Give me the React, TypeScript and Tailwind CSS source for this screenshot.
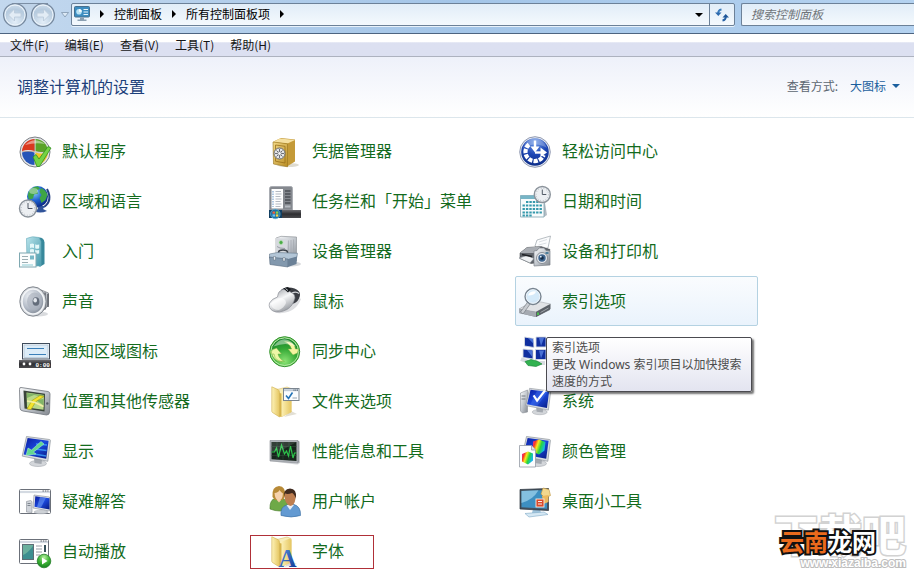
import type { ReactNode } from 'react';

type PanelItem = {
  label: string;
  icon: ReactNode;
  hidden?: boolean;
  active?: boolean;
  marked?: boolean;
};

const Icon = ({ children }: { children: ReactNode }) => (
  <svg viewBox="0 0 32 32" className="size-8 shrink-0 overflow-visible" aria-hidden="true">
    {children}
  </svg>
);

const Gradients = () => (
  <svg className="absolute size-0" aria-hidden="true">
    <defs>
      <linearGradient id="silver" x1="0" y1="0" x2="1" y2="1">
        <stop offset="0" stopColor="#fafbfc" />
        <stop offset="0.5" stopColor="#c3c8ce" />
        <stop offset="1" stopColor="#83888f" />
      </linearGradient>
      <linearGradient id="screen" x1="0" y1="0" x2="1" y2="1">
        <stop offset="0" stopColor="#0a1c9c" />
        <stop offset="0.5" stopColor="#1c4ae0" />
        <stop offset="1" stopColor="#071a80" />
      </linearGradient>
      <linearGradient id="teal" x1="0" y1="0" x2="1" y2="1">
        <stop offset="0" stopColor="#b9e4ec" />
        <stop offset="1" stopColor="#4599ab" />
      </linearGradient>
      <linearGradient id="gold" x1="0" y1="0" x2="1" y2="1">
        <stop offset="0" stopColor="#f3d987" />
        <stop offset="1" stopColor="#b98d24" />
      </linearGradient>
      <linearGradient id="folder" x1="0" y1="0" x2="1" y2="0">
        <stop offset="0" stopColor="#fdf2b8" />
        <stop offset="1" stopColor="#e5c661" />
      </linearGradient>
      <linearGradient id="rainbow" x1="0" y1="0" x2="1" y2="0.4">
        <stop offset="0" stopColor="#f01cc0" />
        <stop offset="0.25" stopColor="#f53c22" />
        <stop offset="0.45" stopColor="#f9e81c" />
        <stop offset="0.7" stopColor="#25d53e" />
        <stop offset="1" stopColor="#16b6ee" />
      </linearGradient>
      <linearGradient id="tray" x1="0" y1="0" x2="0" y2="1">
        <stop offset="0" stopColor="#6b6b6f" />
        <stop offset="0.5" stopColor="#2e2e31" />
        <stop offset="1" stopColor="#4a4a4d" />
      </linearGradient>
      <linearGradient id="letter" x1="0" y1="0" x2="1" y2="1">
        <stop offset="0" stopColor="#5f9be8" />
        <stop offset="1" stopColor="#0b318f" />
      </linearGradient>
      <linearGradient id="mouseBody" x1="0.2" y1="0.1" x2="0.7" y2="1">
        <stop offset="0" stopColor="#a9acb1" />
        <stop offset="0.4" stopColor="#f6f7f8" />
        <stop offset="1" stopColor="#8d9197" />
      </linearGradient>
      <radialGradient id="greenBall" cx="0.5" cy="0.25" r="0.8">
        <stop offset="0" stopColor="#b6f0a0" />
        <stop offset="0.5" stopColor="#3fb336" />
        <stop offset="1" stopColor="#0f7a1c" />
      </radialGradient>
      <radialGradient id="greenCore" cx="0.5" cy="0.85" r="0.9">
        <stop offset="0" stopColor="#8be374" />
        <stop offset="0.5" stopColor="#35a936" />
        <stop offset="1" stopColor="#0f7a25" />
      </radialGradient>
      <radialGradient id="blueBall" cx="0.5" cy="0.15" r="0.9">
        <stop offset="0" stopColor="#6f9be8" />
        <stop offset="0.5" stopColor="#1c45b4" />
        <stop offset="1" stopColor="#0d2c84" />
      </radialGradient>
      <radialGradient id="earth" cx="0.35" cy="0.3" r="0.8">
        <stop offset="0" stopColor="#8fd0fa" />
        <stop offset="0.5" stopColor="#1f62d0" />
        <stop offset="1" stopColor="#081f78" />
      </radialGradient>
      <radialGradient id="cone" cx="0.35" cy="0.3" r="0.8">
        <stop offset="0" stopColor="#eef1f5" />
        <stop offset="0.6" stopColor="#b2bac6" />
        <stop offset="1" stopColor="#7c8490" />
      </radialGradient>
      <radialGradient id="navBall" cx="0.5" cy="0.8" r="0.9">
        <stop offset="0" stopColor="#e3eef8" />
        <stop offset="0.6" stopColor="#b5cade" />
        <stop offset="1" stopColor="#dde8f3" />
      </radialGradient>
    </defs>
  </svg>
);

const Monitor = ({ children }: { children?: ReactNode }) => (
  <>
    <ellipse cx="19" cy="28.5" rx="8.5" ry="3" fill="#d3d6da" stroke="#a3a8ae" strokeWidth="0.6" />
    <path d="M15 23l8 1.5-.5 4.5-7-1z" fill="#a4a9b0" />
    <path d="M7.5 1.5l23 3c.6.1 1 .5.9 1.2l-2.6 20.6-25.6-5.2z" fill="#d9dce0" stroke="#8d939b" strokeWidth="0.7" />
    <path d="M8.6 3l21 2.8-2.4 18-22.6-4.2z" fill="url(#screen)" />
    {children}
  </>
);

const ClockFace = ({ cx, cy, r }: { cx: number; cy: number; r: number }) => (
  <>
    <circle cx={cx} cy={cy} r={r} fill="#eceff2" stroke="#8b939b" strokeWidth="1.4" />
    <circle cx={cx} cy={cy} r={r - 1.8} fill="none" stroke="#a6adb5" strokeWidth="0.9" strokeDasharray="0.8 1.9" />
    <path d={`M${cx} ${cy - r + 3}V${cy}h${r - 4}`} fill="none" stroke="#525a66" strokeWidth="1" />
  </>
);

const WindowFrame = ({ width }: { width: number }) => (
  <>
    <rect x="0.5" y="4.5" width={width} height="24" rx="1" fill="#fff" stroke="#6b7079" />
    <path d={`M1 7h${width - 1}`} stroke="#d4dae2" strokeWidth="2.2" />
    <path d={`M${width - 7.5} 6h6`} stroke="#5b616b" strokeWidth="1.2" strokeDasharray="1.4 1" />
  </>
);

const Folder = () => (
  <>
    <path d="M22 26l6 3-13 3z" fill="#e2dfd4" />
    <path d="M8 4.500L18 2l4 1.500V27l-9 4.500-5-2z" fill="#f8edb9" stroke="#d4b55a" strokeWidth="0.500" />
    <path d="M12 7l8.500-3.500 2 1V27L12 32z" fill="url(#folder)" />
    <path d="M2.800 1.800L9 4.500q1.500 1 1.500 3V32l-7-4.500q-.7-.5-.7-1.500z" fill="url(#folder)" stroke="#ceac4a" strokeWidth="0.600" />
    <path d="M10.500 8l2 .5V32l-2-.5z" fill="#d6b44c" />
  </>
);

const DefaultPrograms = () => (
  <Icon>
    <circle cx="16" cy="17" r="15" fill="#e3e5e9" stroke="#7d8187" />
    <path d="M15.500 16V4A13 13 0 0 0 3 16q6-2 12.500 0z" fill="#d9391f" />
    <path d="M16.500 16V4A13 13 0 0 1 29 16q-6 2-12.500 0z" fill="#5aa329" />
    <path d="M15.500 17.500V30A13 13 0 0 1 3 17.500q6-2 12.500 0z" fill="#2555b8" />
    <path d="M16.500 17.500V30A13 13 0 0 0 29 17.500q-6 2-12.500 0z" fill="#f4c22a" />
    <path d="M15.500 4v12.500H3M16 17h13" fill="none" stroke="#7d4a2c" strokeWidth="0.600" opacity="0.500" />
    <path d="M6 10Q15 1 26 9q-9-2-20 1z" fill="#fff" opacity="0.450" />
    <path d="M14 22l3-2.500 3 4.500 9-12.500 3 1.500-11.500 18.500h-2.500z" fill="#74d344" stroke="#2f8f1e" strokeWidth="0.800" />
  </Icon>
);

const Region = () => (
  <Icon>
    <path d="M28 4q6 12-3 18" fill="none" stroke="#233f82" strokeWidth="2" />
    <path d="M18 21h8l-2 3 4 2q-7 3-13 0l4-2z" fill="#31549a" />
    <circle cx="18.500" cy="11.500" r="10.500" fill="url(#earth)" />
    <path d="M10 6q4-5 9-4.500l2 2-3 2 1 3-4 1-1 4-4 1q-2-4 0-8.500zM22 3q5 2 6.500 7l-2 5-4 3-2-5 2-3-2-3z" fill="#3fa544" />
    <ellipse cx="14.500" cy="6" rx="4.500" ry="3" fill="#fff" opacity="0.400" />
    <ClockFace cx={9} cy={23.500} r={8.500} />
  </Icon>
);

const GettingStarted = () => (
  <Icon>
    <path d="M20 2.500q5 0 5.500 5V29l-5 3z" fill="#37889b" />
    <path d="M7.500 3.500Q13 .5 20 2.500l2 4V31H8z" fill="url(#teal)" stroke="#64a9b8" strokeWidth="0.600" />
    <path d="M11 9q2.500-1 4 0v4q-2-1-4 0zM16.200 9.300q2 1 4 0v4q-2 1-4 0zM11 14.500q2.500-1 4 0v3.500q-2-1-4 0zM16.200 14.800q2 1 4 0v3.500q-2 1-4 0z" fill="#e4f7f9" />
    <rect x="0.500" y="18" width="16.500" height="14" fill="#fbfdfd" stroke="#7fa8b1" />
    <path d="M3 21.500h6M3 24.500h6M3 27.500h6" stroke="#9baeb3" strokeWidth="1.200" />
    <rect x="11" y="20.500" width="4" height="4" fill="#79b9c7" />
    <path d="M3 30h11" stroke="#8bcbd4" />
  </Icon>
);

const Sound = () => (
  <Icon>
    <ellipse cx="19" cy="29" rx="10" ry="2.500" fill="#d9dbde" />
    <path d="M17 3q8 3 12.500 5v12q-4 6-10 8z" fill="url(#silver)" stroke="#74797f" strokeWidth="0.700" />
    <path d="M26 7.500v17M29 9v13" stroke="#62676e" strokeWidth="1.600" />
    <ellipse cx="14" cy="16.500" rx="13.200" ry="14.700" fill="#d3d7dc" stroke="#777d84" strokeWidth="0.900" />
    <ellipse cx="14" cy="16.500" rx="11" ry="12.500" fill="url(#cone)" stroke="#f4f6f8" strokeWidth="1.500" />
    <ellipse cx="15.500" cy="16.500" rx="7.500" ry="9" fill="#acb3bf" opacity="0.700" />
    <ellipse cx="17" cy="16.500" rx="3.400" ry="4.300" fill="#646d7b" />
    <ellipse cx="16.200" cy="15.300" rx="1.800" ry="2.200" fill="#e3e7ed" />
  </Icon>
);

const NotificationIcons = () => (
  <Icon>
    <rect x="3.500" y="8.500" width="27" height="15.500" fill="#f7fafd" stroke="#3f4c5c" />
    <rect x="5" y="10" width="24" height="12.500" fill="#dcecf8" stroke="#a4b9cb" strokeWidth="0.600" />
    <path d="M8 13.500h17M10 19.500h17" stroke="#3a7fb9" strokeWidth="1.200" />
    <rect x="0" y="25" width="32" height="8" fill="url(#tray)" />
    <circle cx="5" cy="29" r="1.400" fill="#fff" />
    <circle cx="11" cy="29" r="1.400" fill="#fff" />
    <text x="16.500" y="31.500" fontSize="6" fontWeight="700" fill="#fff" fontFamily="Liberation Mono, monospace">
      0:00
    </text>
  </Icon>
);

const Location = () => (
  <Icon>
    <path d="M2 2.500l27 4q2 .5 2 2.500l-.5 18q0 3-3 3L4 26q-3-.5-3-3L.5 4.500Q.5 2 2 2.500z" fill="url(#silver)" stroke="#70757c" strokeWidth="0.800" />
    <path d="M4.500 5.500l21.500 3.300-.5 17.700-20-3z" fill="#39443a" />
    <path d="M7.500 7.500l17.500 2.500-.5 14.800-16.500-2.300z" fill="#b9d98a" />
    <path d="M8 13l7-3 10 2v-2L15 9 8 8zM17 15l7.500-1-.5 6z" fill="#81b467" />
    <path d="M25 11.500l-8 5-5 8-4-.5 5-8.500L21 10.500z" fill="#f3e42d" stroke="#a49a12" strokeWidth="0.600" />
    <path d="M8 16l8 1.500 8.500 4" fill="none" stroke="#f4f0a6" strokeWidth="1.600" />
    <circle cx="28.300" cy="18.500" r="1.200" fill="#565c64" />
  </Icon>
);

const Display = () => (
  <Icon>
    <Monitor>
      <path d="M17 9l11 1M16 14l11.500 1.500M15 19l12 2" stroke="#3fa5ff" strokeWidth="1.300" opacity="0.800" />
      <path d="M22 6.500l-9.500 8.500-3.500-2-2 7.500 10-1.500-2.500-2L25 9z" fill="#62d890" stroke="#bdf5d2" strokeWidth="0.500" />
    </Monitor>
  </Icon>
);

const Troubleshooting = () => (
  <Icon>
    <WindowFrame width={31} />
    <path d="M7.500 16.500l4-1 1.500 1v11l-5.500-.5z" fill="#d0d4da" stroke="#8c9199" strokeWidth="0.600" />
    <path d="M8.500 18.500h3M8.500 20.500h3" stroke="#7f868f" />
    <path d="M15 10l15.500 2v14l-16.500-3z" fill="#e1e4e8" stroke="#868c94" strokeWidth="0.600" />
    <path d="M16.300 11.300l14.200 1.900v11.200l-15-2.700z" fill="url(#screen)" />
    <path d="M21 12l6 .8-5 9.800-4-.6z" fill="#7caaf7" opacity="0.500" />
    <ellipse cx="22" cy="27" rx="7" ry="1.800" fill="#cdd1d6" stroke="#9ba0a6" strokeWidth="0.400" />
  </Icon>
);

const AutoPlay = () => (
  <Icon>
    <WindowFrame width={29} />
    <rect x="3.500" y="9.500" width="11" height="15" fill="#3e8f90" stroke="#5e6d75" />
    <path d="M4 20q5-2 10-9v-1H4z" fill="#89c7a6" opacity="0.600" />
    <path d="M17 11h6M17 14h6M17 17h6M17 20h4" stroke="#979da6" strokeWidth="1.200" />
    <path d="M26 10v7" stroke="#37505a" strokeWidth="2" />
    <circle cx="25" cy="26" r="6.800" fill="url(#greenBall)" stroke="#26802a" strokeWidth="0.800" />
    <path d="M23 22.500l5.500 3.500-5.500 3.500z" fill="#fff" />
  </Icon>
);

const Credentials = () => (
  <Icon>
    <ellipse cx="19" cy="30" rx="11" ry="2" fill="#dedbd0" />
    <path d="M4.500 6.500L12 3l14 1.500v22L18 31.500z" fill="#c49a38" />
    <path d="M4 7l7-3.500 15 1.500-7.500 3.500z" fill="#f5e0a0" />
    <path d="M4 7l14.500 1.800v23L4.500 29z" fill="url(#gold)" stroke="#97731d" strokeWidth="0.600" />
    <path d="M6.500 10l9.500 1.300v16.700l-9.500-1.800z" fill="none" stroke="#98701b" strokeWidth="0.800" />
    <circle cx="10.500" cy="18.500" r="5.500" fill="#e4e5e7" stroke="#686b70" />
    <path d="M10.500 14v9M6 18.500h9M7.500 15.500l6 6M13.500 15.500l-6 6" stroke="#5d6066" strokeWidth="0.900" />
    <circle cx="10.500" cy="18.500" r="1.800" fill="#f6f7f8" stroke="#65686e" strokeWidth="0.600" />
  </Icon>
);

const Taskbar = () => (
  <Icon>
    <path d="M.5 3.500q0-2 2-2H22q1.500 0 1.500 2V25H.5z" fill="#85898f" stroke="#a3a7ad" strokeWidth="0.800" />
    <rect x="2.500" y="4" width="11.500" height="19.500" fill="#fdfdfd" />
    <path d="M6.500 6.500h5.500M6.500 9h6M6.500 11.500h5M6.500 14h6M6.500 16.500h5M6.500 19h6M6.500 21.500h5" stroke="#b5bac2" />
    <path d="M4 6v16" stroke="#8ab0d6" strokeWidth="1.300" strokeDasharray="1.400 1.100" />
    <path d="M16 6h5.500M16 9h5.500M16 12h5.500M16 15h5.500M16 18h5.500" stroke="#4b4f55" strokeWidth="1.300" />
    <rect x="16" y="20.500" width="5.500" height="2" fill="#b5bac0" />
    <rect x="0" y="25" width="32" height="8" fill="url(#tray)" />
    <path d="M0 25h13v8H0z" fill="#123f62" />
    <circle cx="6.300" cy="29" r="4.800" fill="#1870a6" stroke="#72bddd" strokeWidth="0.600" />
    <path d="M3.500 26.500h2.500v2.200H3.500z" fill="#f0603b" />
    <path d="M6.800 26.500h2.500v2.200H6.800z" fill="#8fd24a" />
    <path d="M3.500 29.400h2.500v2.200H3.500z" fill="#6ec3f3" />
    <path d="M6.800 29.400h2.500v2.200H6.800z" fill="#fcd441" />
  </Icon>
);

const DeviceManager = () => (
  <Icon>
    <ellipse cx="22" cy="29" rx="10" ry="2.500" fill="#d7d9dc" />
    <path d="M7 3l5-1.700 15.500.7v24L18 28 7 25z" fill="url(#silver)" stroke="#85898f" strokeWidth="0.600" />
    <path d="M7 3l11 1v23L7 25z" fill="#d6d9de" />
    <path d="M19.500 5.500v19M22 5v19M24.500 4.500v19" stroke="#a3a8af" strokeWidth="0.700" />
    <circle cx="12" cy="7.500" r="2" fill="#48aa45" stroke="#b9e5b5" strokeWidth="0.700" />
    <path d="M8 11.500q2 2 8 2" stroke="#888e96" strokeWidth="0.800" fill="none" />
    <path d="M9.500 20v-2.500q0-2.500 4.500-2.500t4.500 2.500V20" fill="none" stroke="#3d434b" strokeWidth="1.500" />
    <path d="M.5 19l8-1.500 20 .8-.7 4.200-8.800 2.500L.5 23z" fill="#b3c6d7" stroke="#65798c" strokeWidth="0.600" />
    <path d="M.5 22l18.500 2v8L1 29.500z" fill="#8399ae" stroke="#596c80" strokeWidth="0.600" />
    <path d="M19 24l9-2.500-.5 7.500-8.500 3z" fill="#6b8197" />
    <path d="M4.500 21.500h2v3.500h-2zM14 22.500h2V26h-2z" fill="#e7ecf1" stroke="#4d5b69" strokeWidth="0.400" />
  </Icon>
);

const Mouse = () => (
  <Icon>
    <path d="M4 25q14 3 25-13l3 2q-5 13-19 14-7 1-9-3z" fill="#dcdde0" />
    <path d="M12 5q3-3 6-2.500 8-.5 12 4 2 3 0 7-3 6-8 5z" fill="#3a3d43" />
    <path d="M10 7q3-3.500 7-3l6 4q3 1 3 5-2 8-8 11.500-8 4-14 1.500-5-3-3.500-8Q3 13.500 8.500 12 9 8.500 10 7z" fill="url(#mouseBody)" stroke="#7d8289" strokeWidth="0.600" />
    <path d="M2 19q2-5 8-6 7 0 7 5-2 5-7 7-7 0-8-6z" fill="#fff" opacity="0.600" />
    <path d="M23 8q4-2 7 .5" fill="none" stroke="#d5d8dc" strokeWidth="1.200" />
    <path d="M14.500 3.500l4-1.500 3.500 2-3 3.500z" fill="#15181c" />
    <path d="M16.500 3.500l2.500 2" stroke="#c3c8ce" />
  </Icon>
);

const SyncCenter = () => (
  <Icon>
    <circle cx="15.700" cy="16.700" r="15" fill="#5fc04a" stroke="#349330" />
    <circle cx="15.700" cy="16.700" r="13.800" fill="url(#greenCore)" stroke="#c3eeb4" strokeWidth="0.900" />
    <path d="M4.500 14L8 17.500H6.500q.5 6 6.500 9.500-9-1-10.500-9.500H.8z" fill="#eef6a6" stroke="#7cbc42" strokeWidth="0.500" />
    <path d="M3 15l4.500-2 5 6H9q1 5 6.500 7.500Q6 27 5 19H2z" fill="#eef6a6" stroke="#6eb23e" strokeWidth="0.500" />
    <path d="M28.500 18l-4.500 2-5-6h3.500q-1-4.500-7-7.500Q25.500 6 26.500 14h3z" fill="#f5f3a0" stroke="#6eb23e" strokeWidth="0.500" />
    <path d="M4.500 11.500Q15-3 27 11.500q-10-5-22.500 0z" fill="#fff" opacity="0.450" />
  </Icon>
);

const FolderOptions = () => (
  <Icon>
    <Folder />
    <rect x="14.500" y="3.500" width="15.500" height="12" fill="#fafcfe" stroke="#7b858f" />
    <path d="M15 5.200h14.500" stroke="#c0cbd6" strokeWidth="2" />
    <path d="M24.500 5.200h4.500" stroke="#4b5a6a" strokeWidth="1.200" strokeDasharray="1 .8" />
    <path d="M17 10.500l2.500 3 4-6" fill="none" stroke="#2372b6" strokeWidth="1.600" />
    <path d="M23.500 13h4.500" stroke="#98a4b0" />
  </Icon>
);

const Performance = () => (
  <Icon>
    <path d="M28.500 5.500l2 1v21.500l-2 1z" fill="#9da1a6" />
    <path d="M14 26l16 1.500q1 2-3 2L8 27z" fill="#d7d9dc" />
    <path d="M1 5.500h28v22.500L1 26z" fill="#b0b4b9" stroke="#888c92" strokeWidth="0.600" />
    <path d="M2.500 7h25v19L2.500 24.200z" fill="#17251c" />
    <path d="M2.500 11.500h25M2.500 16h25M2.500 20.500h25M8 7v17.500M14 7v18M20 7v18.500" stroke="#355340" strokeWidth="0.500" />
    <path d="M2.500 17h3l2-4 2 9 3-12 3 9 2-3 2 5 2-10 2.500 12 1.500-5h2" fill="none" stroke="#2cc44b" strokeWidth="1.200" />
    <path d="M2.500 7h25l-14 8-11 1z" fill="#fff" opacity="0.120" />
  </Icon>
);

const Users = () => (
  <Icon>
    <path d="M1 24q-.5-9 5-10.500l7-.5q6 2 6 11-8 4-18 0z" fill="#6ea947" stroke="#467a29" strokeWidth="0.600" />
    <path d="M6.500 13.500l3.500 4 3.500-4z" fill="#f2c9a0" />
    <path d="M3.500 12q-1-10.500 6.500-11 7 .5 6 10l-2 4H6z" fill="#b88a37" />
    <path d="M5.500 8q4-.5 5-3 2 3 3.500 3.500-.5 7-4.500 7Q6 15 5.500 8z" fill="#f6d2ad" />
    <path d="M12 30.500q-1-9 6-10.500l7-.5q7 2 6.500 11-9 3-19.500 0z" fill="#639ad2" stroke="#376ba0" strokeWidth="0.600" />
    <path d="M17.500 20l3.500 5 4-5z" fill="#e9f0f8" />
    <path d="M15.500 12q0-7 6-7.500 6 .5 5 9-1 7-5 7.500-5-1-6-9z" fill="#bd7e50" />
    <path d="M15 12q-1-8 6-8.500 7 0 6 10-2-5-4-5.500-4 1.500-7 .5z" fill="#402a1e" />
  </Icon>
);

const Fonts = () => (
  <Icon>
    <Folder />
    <text x="9.500" y="31.500" fontSize="25" fontWeight="700" fill="url(#letter)" fontFamily="Liberation Serif, serif">
      A
    </text>
  </Icon>
);

const EaseOfAccess = () => (
  <Icon>
    <circle cx="16" cy="17" r="15.300" fill="#e8ecf3" stroke="#7883a0" strokeWidth="0.800" />
    <circle cx="16" cy="17" r="13.800" fill="url(#blueBall)" />
    <path d="M10 9.500A9.300 9.300 0 1 0 24.500 20" fill="none" stroke="#fff" strokeWidth="4.200" strokeDasharray="4.200 1.200" />
    <path d="M16 5.500v9.500" stroke="#fff" strokeWidth="2.400" />
    <path d="M11.500 11.500l4.500 6 4.500-6z" fill="#fff" />
    <path d="M16 17.500h9" stroke="#fff" strokeWidth="2.400" />
    <path d="M21.500 12.500l6.500 5-6.500 4.500z" fill="#fff" />
    <path d="M4 13Q8 3 16 3.500 24 3 28 13 17 6 4 13z" fill="#fff" opacity="0.250" />
  </Icon>
);

const DateTime = () => (
  <Icon>
    <path d="M25 12l3 18-3 2z" fill="#b5bdc4" />
    <path d="M1.500 10.500h23.500V32H1.500z" fill="#f8fbfc" stroke="#7fa3ae" strokeWidth="0.800" />
    <path d="M1.500 10.500h23.500v3.500H1.500z" fill="#77b5c6" />
    <path d="M7 17h16M3.500 20.500h19.500M3.500 24h19.500M3.500 27.500h19.500M3.500 30.500h10" stroke="#3599ac" strokeWidth="2.200" strokeDasharray="2.400 1" />
    <ClockFace cx={23.300} cy={9.500} r={8} />
  </Icon>
);

const DevicesPrinters = () => (
  <Icon>
    <path d="M16 11l2-6 13.500-4-2.500 12-10 2z" fill="#fbfcfd" stroke="#9ba3ab" strokeWidth="0.700" />
    <path d="M20 7l8-2.500M19.500 10l8-2" stroke="#d2d7dc" strokeWidth="0.800" />
    <path d="M1 18l7-5.500 14-1 9 3-3 12-16 2-11-5z" fill="#62666c" stroke="#393c41" strokeWidth="0.500" />
    <path d="M1 18l7-5.500 14-1-7 6.500z" fill="#a9adb3" />
    <path d="M0 23l8-2.500 7 3-4 4.500z" fill="#f0f2f4" stroke="#7e848b" strokeWidth="0.600" />
    <path d="M3 19.500l10 2" stroke="#202327" strokeWidth="1.600" />
    <path d="M15 16l3-.5 2-2.500h5l2 2.500 4 .5v14l-16 1z" fill="url(#silver)" stroke="#7d838a" strokeWidth="0.700" />
    <circle cx="23" cy="23" r="5.500" fill="#e7eaee" stroke="#777e86" strokeWidth="0.800" />
    <circle cx="23" cy="23" r="3.700" fill="#3e658e" />
    <circle cx="23" cy="23" r="1.800" fill="#142b46" />
    <circle cx="21.800" cy="21.700" r="0.900" fill="#e6f2fc" />
    <rect x="26.500" y="17" width="3" height="2" fill="#4d7f9c" />
  </Icon>
);

const Indexing = () => (
  <Icon>
    <path d="M0 24l15-8 16 4v5L17 32 0 28z" fill="#7a7f86" />
    <path d="M0 24l15-8.500 16.500 3.500L17 27z" fill="#e1e3e6" stroke="#9ca0a6" strokeWidth="0.500" />
    <path d="M17 27l14.500-8v5L17 32z" fill="#5b6067" />
    <path d="M0 24l17 3v5L0 28z" fill="#a5aab1" />
    <path d="M19 27.500v2.500" stroke="#47d24c" strokeWidth="1.600" />
    <path d="M21.500 27.500l8-4.500" stroke="#9fa4aa" />
    <path d="M9 16.500l2.500 2L4 29l-2.500-2z" fill="#c8ccd1" stroke="#6c7279" strokeWidth="0.600" />
    <circle cx="14" cy="11.500" r="7.800" fill="#d2e8f8" fillOpacity="0.900" stroke="#77838f" strokeWidth="1.700" />
    <circle cx="14" cy="11.500" r="6.800" fill="none" stroke="#eef5fb" />
    <path d="M9 10.500q2-5 8-4-1 4-8 4z" fill="#fff" />
  </Icon>
);

const RemoteApps = () => (
  <Icon>
    <path d="M5.500 2l9 1.500 .5 9-9.500-1.500zM17 2h10v10H17zM4 14l10 1v9l-10-1.500zM16.500 14.500H27v10H16.500z" fill="#102f9f" stroke="#d7dce3" strokeWidth="0.900" />
    <path d="M9 3l5 .8.500 5zM20 3h5l-3 8zM8 15l5 .5v6zM20 15.500h5l-3 8z" fill="#638ded" opacity="0.700" />
    <path d="M2 24l10 4h14" fill="none" stroke="#d7dbe0" strokeWidth="4" />
    <path d="M6 26.500l6-2 6 1.500 5 3-6 2.500-8-1z" fill="#32b250" stroke="#168234" strokeWidth="0.600" />
  </Icon>
);

const SystemInfo = () => (
  <Icon>
    <path d="M1.500 8l7-3v22l-5 1-2-2z" fill="url(#silver)" stroke="#8a8f96" strokeWidth="0.600" />
    <path d="M2.500 11h4M2.500 14h4" stroke="#757b83" />
    <g transform="translate(4 2) scale(0.880)">
      <Monitor>
        <path d="M16 3.900l12 1.500-12 16.500-8-1.500z" fill="#507fee" opacity="0.350" />
        <path d="M12 9.500l4 6L25 4" fill="none" stroke="#fff" strokeWidth="2.400" />
      </Monitor>
    </g>
  </Icon>
);

const ColorManagement = () => (
  <Icon>
    <Monitor>
      <path d="M14 6.500l6-2 6.500 2.500-1 8.500-5.500 4-6.500-3z" fill="url(#rainbow)" />
    </Monitor>
    <path d="M.5 10.500h12l4 4.500v17H.5z" fill="#fbfcfe" stroke="#949ba5" strokeWidth="0.800" />
    <path d="M12.500 10.500v4.500h4" fill="#dce2ea" stroke="#949ba5" strokeWidth="0.800" />
    <path d="M3 19l6-2.500 5 2v7l-5 4-6-3z" fill="url(#rainbow)" />
  </Icon>
);

const Gadgets = () => (
  <Icon>
    <path d="M14 24h7l1 4h-9z" fill="#9fc4dd" />
    <path d="M6 28.500l19-1.500 4 2.500-19 2.500z" fill="#d5e8f4" stroke="#7fa9c6" strokeWidth="0.600" />
    <path d="M1 4.500l28.500-1v22L1 24z" fill="#45525f" stroke="#27313b" strokeWidth="0.700" />
    <path d="M2.500 6l25.500-1v18.700L2.500 22.300z" fill="#3d8fc1" />
    <path d="M2.500 6l17-.7Q14 15 2.500 18z" fill="#a2d4ed" opacity="0.700" />
    <path d="M24 3l6 1.500 1.500 6-5.500 2.500-4-4z" fill="#f3d88e" stroke="#c09742" strokeWidth="0.600" />
    <path d="M23 11l6.500-1v7l-5 2z" fill="#edb95d" />
    <rect x="17" y="14" width="8" height="8" fill="#d94a2a" stroke="#f6e8df" strokeWidth="0.900" />
    <path d="M19 16.500h4M19 19h4" stroke="#fff" strokeWidth="0.900" />
  </Icon>
);

const ITEMS: PanelItem[] = [
  { label: '默认程序', icon: <DefaultPrograms /> },
  { label: '凭据管理器', icon: <Credentials /> },
  { label: '轻松访问中心', icon: <EaseOfAccess /> },
  { label: '区域和语言', icon: <Region /> },
  { label: '任务栏和「开始」菜单', icon: <Taskbar /> },
  { label: '日期和时间', icon: <DateTime /> },
  { label: '入门', icon: <GettingStarted /> },
  { label: '设备管理器', icon: <DeviceManager /> },
  { label: '设备和打印机', icon: <DevicesPrinters /> },
  { label: '声音', icon: <Sound /> },
  { label: '鼠标', icon: <Mouse /> },
  { label: '索引选项', icon: <Indexing />, active: true },
  { label: '通知区域图标', icon: <NotificationIcons /> },
  { label: '同步中心', icon: <SyncCenter /> },
  { label: '远程连接', icon: <RemoteApps />, hidden: true },
  { label: '位置和其他传感器', icon: <Location /> },
  { label: '文件夹选项', icon: <FolderOptions /> },
  { label: '系统', icon: <SystemInfo /> },
  { label: '显示', icon: <Display /> },
  { label: '性能信息和工具', icon: <Performance /> },
  { label: '颜色管理', icon: <ColorManagement /> },
  { label: '疑难解答', icon: <Troubleshooting /> },
  { label: '用户帐户', icon: <Users /> },
  { label: '桌面小工具', icon: <Gadgets /> },
  { label: '自动播放', icon: <AutoPlay /> },
  { label: '字体', icon: <Fonts />, marked: true },
];

const MENUS = ['文件(F)', '编辑(E)', '查看(V)', '工具(T)', '帮助(H)'];

const Crumb = () => (
  <svg viewBox="0 0 4 8" className="h-2 w-1 shrink-0" aria-hidden="true">
    <path d="M0 0l4 4-4 4z" fill="#000" />
  </svg>
);

const Caret = ({ className }: { className: string }) => (
  <svg viewBox="0 0 8 4" className={className} aria-hidden="true">
    <path d="M0 0h8L4 4z" fill="currentColor" />
  </svg>
);

const NavButtons = () => (
  <div className="relative flex shrink-0 items-center gap-1 pl-[3px]">
    <div className="absolute top-0 left-3 h-4 w-9 border-t border-[#7c8fa5] bg-[#bfd3e8]" />
    <button type="button" aria-label="后退" className="relative size-6">
      <svg viewBox="0 0 24 24" className="size-6">
        <circle cx="12" cy="12" r="11.400" fill="url(#navBall)" stroke="#75879c" strokeWidth="1.200" />
        <circle cx="12" cy="12" r="10" fill="none" stroke="#eef5fb" />
        <path d="M5.500 12l6-6v4H18v4h-6.500v4z" fill="#e2ecf5" stroke="#b9c9d9" strokeWidth="0.800" />
      </svg>
    </button>
    <button type="button" aria-label="前进" className="relative size-6">
      <svg viewBox="0 0 24 24" className="size-6">
        <circle cx="12" cy="12" r="11.400" fill="url(#navBall)" stroke="#75879c" strokeWidth="1.200" />
        <circle cx="12" cy="12" r="10" fill="none" stroke="#eef5fb" />
        <path d="M18.500 12l-6-6v4H6v4h6.500v4z" fill="#e2ecf5" stroke="#b9c9d9" strokeWidth="0.800" />
      </svg>
    </button>
    <button type="button" aria-label="最近的位置" className="px-0.5">
      <svg viewBox="0 0 8 6" className="h-1.5 w-2">
        <path d="M.5 .5h7L4 5z" fill="#dce9f5" stroke="#8297ad" strokeWidth="0.800" />
      </svg>
    </button>
  </div>
);

const AddressBar = () => (
  <div className="flex min-w-0 flex-1 rounded-xs border border-[#6c8198] bg-linear-to-b from-[#e1edf8] to-[#f4f9fd] shadow-[0_1px_0_#e8f2fb]">
    <nav className="flex min-w-0 flex-1 items-center gap-2.5 pb-0.5 pl-0.5 text-black" aria-label="地址">
      <svg viewBox="0 0 16 15" className="h-[15px] w-4 shrink-0" aria-hidden="true">
        <rect x="0.500" y="0.500" width="15" height="10.500" rx="1" fill="#3d8dc0" stroke="#47708f" />
        <circle cx="5" cy="5.700" r="2.800" fill="#b9e3f5" />
        <path d="M5 5.700V2.900a2.800 2.800 0 0 1 2.800 2.800z" fill="#f7fcff" />
        <path d="M9.500 3.500h4.500M9.500 6h4.500M9.500 8.500h4.500" stroke="#e4f4fc" strokeWidth="1.200" />
        <path d="M6 11.500h4v2h2.500V15h-9v-1.500H6z" fill="#8ba0b2" />
      </svg>
      <Crumb />
      <a href="#panel">控制面板</a>
      <Crumb />
      <a href="#all">所有控制面板项</a>
      <Crumb />
    </nav>
    <button type="button" aria-label="以前的位置" className="px-1.5">
      <Caret className="h-1 w-2 text-black" />
    </button>
    <button type="button" aria-label="刷新" className="flex w-[25px] items-center justify-center border-l border-[#6c8198]">
      <svg viewBox="0 0 14 14" className="size-3.5" aria-hidden="true">
        <path d="M6.500 1.500Q3 2 3.200 6" fill="none" stroke="#3a7cbd" strokeWidth="2" />
        <path d="M0 4.500h6.500L3.300 8z" fill="#2c69ad" />
        <path d="M7.500 12.500Q11 12 10.800 8" fill="none" stroke="#2560a5" strokeWidth="2" />
        <path d="M7.500 9.500H14L10.700 6z" fill="#1f5699" />
      </svg>
    </button>
  </div>
);

const Tooltip = () => (
  <div
    role="tooltip"
    className="absolute top-[61px] left-[31px] z-10 w-[206px] rounded-xs border border-[#4b4b50] bg-linear-to-b from-white to-[#e3e4f0] px-[5px] py-px font-['Noto_Sans','Noto_Sans_CJK_SC',sans-serif] text-xs leading-[17px] whitespace-nowrap text-[#4c4c4c] shadow-[2px_2px_2px_rgba(0,0,0,0.55)]"
  >
    <p>索引选项</p>
    <p>更改 Windows 索引项目以加快搜索</p>
    <p>速度的方式</p>
  </div>
);

const PanelEntry = ({ label, icon, hidden, active, marked }: PanelItem) => (
  <li className="relative mr-[7px] h-[50px]">
    <a
      href="#item"
      aria-label={hidden ? label : undefined}
      className={
        active
          ? 'flex h-full items-center gap-[11px] rounded-xs border border-[#b4d2e2] bg-linear-to-b from-[#fafcfe] to-[#eaf3fc] px-[3px]'
          : 'flex h-full items-center gap-[11px] px-1'
      }
    >
      {icon}
      {!hidden && <span className="pb-0.5">{label}</span>}
    </a>
    {active && <Tooltip />}
    {marked && <div className="absolute top-[9px] -left-[15px] h-[34px] w-[124px] border border-[#b03038]" />}
  </li>
);

const Watermark = () => (
  <div className="pointer-events-none absolute right-2 bottom-0 h-16 w-[132px]" aria-hidden="true">
    <p className="absolute top-0 right-0 text-[44px] leading-[52px] font-bold whitespace-nowrap text-white [-webkit-text-stroke:3px_#d2d2d2] [paint-order:stroke]">
      下载吧
    </p>
    <p className="absolute right-0 bottom-0 font-['Liberation_Sans'] text-xs leading-4 font-bold whitespace-nowrap text-white [-webkit-text-stroke:2px_#bdbdbd] [paint-order:stroke]">
      www.xiazaiba.com
    </p>
    <p className="absolute top-[18px] left-1.5 text-2xl leading-8 font-bold whitespace-nowrap text-white [-webkit-text-stroke:4px_#111] [paint-order:stroke]">
      <span className="text-[#ea6a1c]">云南</span>龙网
    </p>
  </div>
);

const App = () => {
  return (
    <div className="relative flex h-screen flex-col overflow-hidden bg-white font-['Noto_Sans_CJK_SC',sans-serif] text-xs">
      <Gradients />
      <header className="flex h-[34px] shrink-0 border-b border-[#4d6480] bg-linear-to-r from-[#c3d8ee] via-[#a3c5e8] to-[#b4d2f0] pt-[3px] pb-[7px]">
        <NavButtons />
        <AddressBar />
        <input
          type="search"
          aria-label="搜索控制面板"
          placeholder="搜索控制面板"
          className="ml-1.5 w-[173px] shrink-0 rounded-l-xs border border-r-0 border-[#6c8198] bg-linear-to-b from-[#e1edf8] to-[#f4f9fd] px-[9px] pb-0.5 italic placeholder:text-[#6f7479]"
        />
      </header>

      <div className="flex h-[23px] shrink-0 items-center gap-4 border-b border-[#adb2bf] bg-linear-to-b from-white from-35% to-[#dce0f1] to-40% px-2.5 text-[#151515]">
        {MENUS.map((menu) => (
          <button key={menu} type="button">
            {menu}
          </button>
        ))}
      </div>

      <main className="flex-1">
        <div className="flex h-[61px] items-center justify-between border-b border-[#dce6ec] bg-linear-to-b from-[#eef1fa] to-white pr-3.5 pb-0.5 pl-[17px]">
          <h1 className="text-base text-[#1c3f7a]">调整计算机的设置</h1>
          <div className="flex items-center">
            <label htmlFor="view" className="mr-3 text-[#5c6670]">
              查看方式:
            </label>
            <select id="view" className="w-9 appearance-none text-[#1b5f9e]">
              <option>大图标</option>
            </select>
            <Caret className="ml-1.5 h-1 w-2 text-[#1b5f9e]" />
          </div>
        </div>
        <ul className="mt-2 grid grid-cols-[repeat(auto-fill,250px)] pl-[15px] text-base text-[#136b1d]">
          {ITEMS.map((item) => (
            <PanelEntry key={item.label} {...item} />
          ))}
        </ul>
      </main>
      <Watermark />
    </div>
  );
};

export default App;
